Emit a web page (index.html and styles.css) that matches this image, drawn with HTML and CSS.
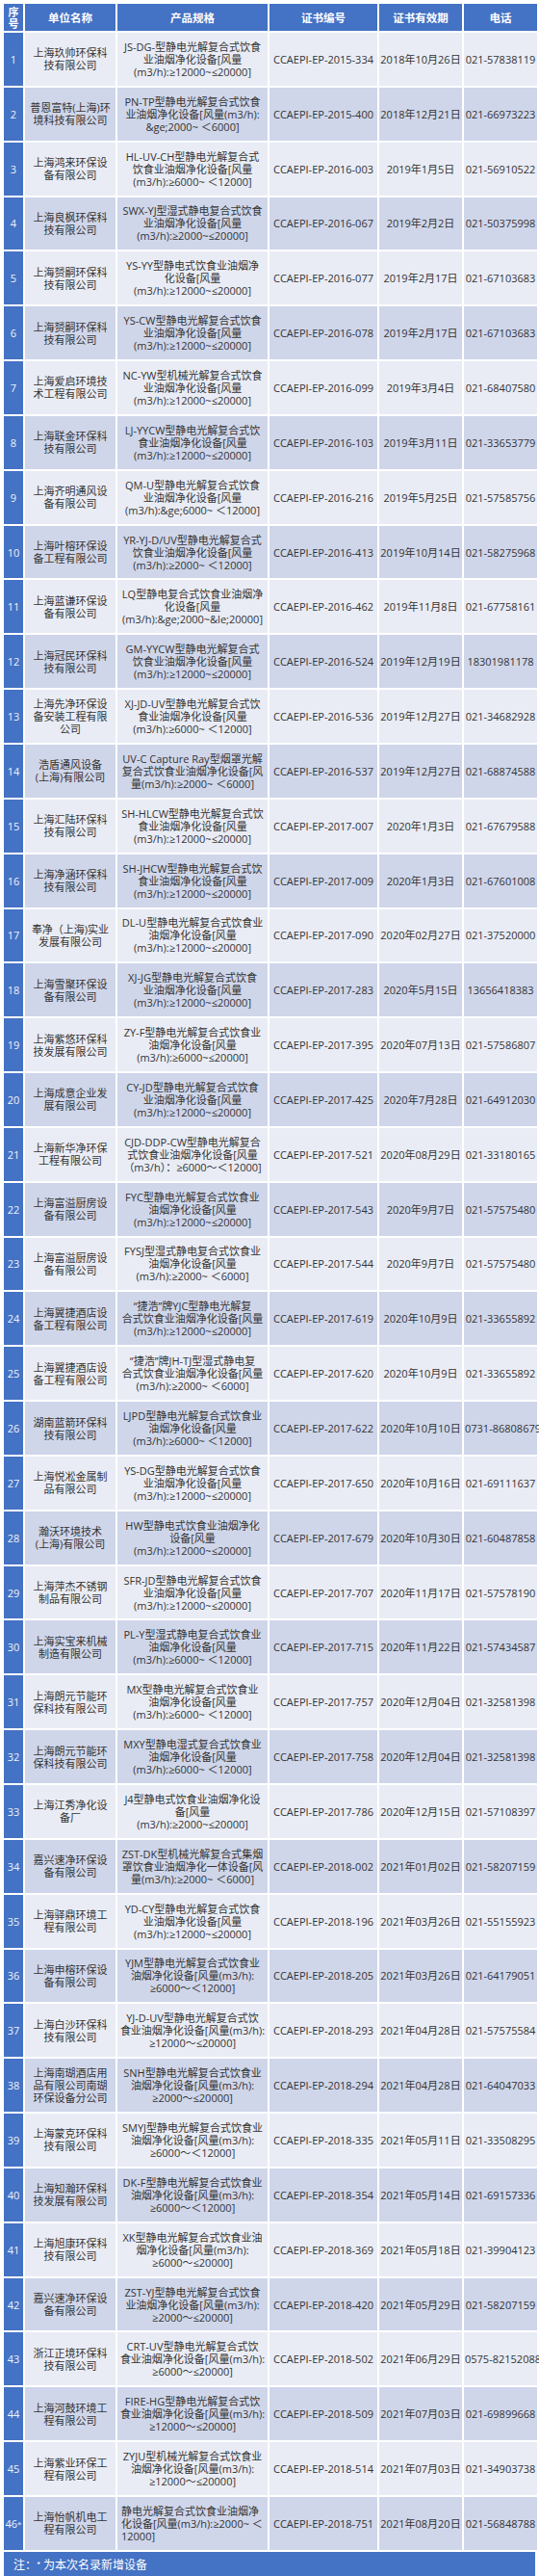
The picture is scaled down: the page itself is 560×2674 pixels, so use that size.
FILE: index.html
```html
<!DOCTYPE html>
<html lang="zh-CN">
<head>
<meta charset="utf-8">
<title>饮食业油烟净化设备名录</title>
<link rel="stylesheet" href="styles.css">
</head>
<body>
<div class="sheet">
<table class="cert-table">
<colgroup>
<col class="c-no"><col class="c-name"><col class="c-spec"><col class="c-cert"><col class="c-date"><col class="c-tel">
</colgroup>
<thead>
<tr><th class="h-no">序<br>号</th><th>单位名称</th><th>产品规格</th><th>证书编号</th><th>证书有效期</th><th>电话</th></tr>
</thead>
<tbody>
<tr><td class="no">1</td><td>上海玖帅环保科<br>技有限公司</td><td>JS-DG-型静电光解复合式饮食<br>业油烟净化设备[风量<br>(m3/h):≥12000~≤20000]</td><td>CCAEPI-EP-2015-334</td><td>2018年10月26日</td><td>021-57838119</td></tr>
<tr><td class="no">2</td><td>普恩富特(上海)环<br>境科技有限公司</td><td>PN-TP型静电光解复合式饮食<br>业油烟净化设备[风量(m3/h):<br>&amp;ge;2000~ ＜6000]</td><td>CCAEPI-EP-2015-400</td><td>2018年12月21日</td><td>021-66973223</td></tr>
<tr><td class="no">3</td><td>上海鸿来环保设<br>备有限公司</td><td>HL-UV-CH型静电光解复合式<br>饮食业油烟净化设备[风量<br>(m3/h):≥6000~ ＜12000]</td><td>CCAEPI-EP-2016-003</td><td>2019年1月5日</td><td>021-56910522</td></tr>
<tr><td class="no">4</td><td>上海良枫环保科<br>技有限公司</td><td>SWX-YJ型湿式静电复合式饮食<br>业油烟净化设备[风量<br>(m3/h):≥2000~≤20000]</td><td>CCAEPI-EP-2016-067</td><td>2019年2月2日</td><td>021-50375998</td></tr>
<tr><td class="no">5</td><td>上海赟嗣环保科<br>技有限公司</td><td>YS-YY型静电式饮食业油烟净<br>化设备[风量<br>(m3/h):≥12000~≤20000]</td><td>CCAEPI-EP-2016-077</td><td>2019年2月17日</td><td>021-67103683</td></tr>
<tr><td class="no">6</td><td>上海赟嗣环保科<br>技有限公司</td><td>YS-CW型静电光解复合式饮食<br>业油烟净化设备[风量<br>(m3/h):≥12000~≤20000]</td><td>CCAEPI-EP-2016-078</td><td>2019年2月17日</td><td>021-67103683</td></tr>
<tr><td class="no">7</td><td>上海爱启环境技<br>术工程有限公司</td><td>NC-YW型机械光解复合式饮食<br>业油烟净化设备[风量<br>(m3/h):≥12000~≤20000]</td><td>CCAEPI-EP-2016-099</td><td>2019年3月4日</td><td>021-68407580</td></tr>
<tr><td class="no">8</td><td>上海联金环保科<br>技有限公司</td><td>LJ-YYCW型静电光解复合式饮<br>食业油烟净化设备[风量<br>(m3/h):≥12000~≤20000]</td><td>CCAEPI-EP-2016-103</td><td>2019年3月11日</td><td>021-33653779</td></tr>
<tr><td class="no">9</td><td>上海齐明通风设<br>备有限公司</td><td>QM-U型静电光解复合式饮食<br>业油烟净化设备[风量<br>(m3/h):&amp;ge;6000~ ＜12000]</td><td>CCAEPI-EP-2016-216</td><td>2019年5月25日</td><td>021-57585756</td></tr>
<tr><td class="no">10</td><td>上海叶榕环保设<br>备工程有限公司</td><td>YR-YJ-D/UV型静电光解复合式<br>饮食业油烟净化设备[风量<br>(m3/h):≥2000~ ＜12000]</td><td>CCAEPI-EP-2016-413</td><td>2019年10月14日</td><td>021-58275968</td></tr>
<tr><td class="no">11</td><td>上海蓝谦环保设<br>备有限公司</td><td>LQ型静电复合式饮食业油烟净<br>化设备[风量<br>(m3/h):&amp;ge;2000~&amp;le;20000]</td><td>CCAEPI-EP-2016-462</td><td>2019年11月8日</td><td>021-67758161</td></tr>
<tr><td class="no">12</td><td>上海冠民环保科<br>技有限公司</td><td>GM-YYCW型静电光解复合式<br>饮食业油烟净化设备[风量<br>(m3/h):≥12000~≤20000]</td><td>CCAEPI-EP-2016-524</td><td>2019年12月19日</td><td>18301981178</td></tr>
<tr><td class="no">13</td><td>上海先净环保设<br>备安装工程有限<br>公司</td><td>XJ-JD-UV型静电光解复合式饮<br>食业油烟净化设备[风量<br>(m3/h):≥6000~ ＜12000]</td><td>CCAEPI-EP-2016-536</td><td>2019年12月27日</td><td>021-34682928</td></tr>
<tr><td class="no">14</td><td>浩盾通风设备<br>(上海)有限公司</td><td>UV-C Capture Ray型烟罩光解<br>复合式饮食业油烟净化设备[风<br>量(m3/h):≥2000~ ＜6000]</td><td>CCAEPI-EP-2016-537</td><td>2019年12月27日</td><td>021-68874588</td></tr>
<tr><td class="no">15</td><td>上海汇陆环保科<br>技有限公司</td><td>SH-HLCW型静电光解复合式饮<br>食业油烟净化设备[风量<br>(m3/h):≥12000~≤20000]</td><td>CCAEPI-EP-2017-007</td><td>2020年1月3日</td><td>021-67679588</td></tr>
<tr><td class="no">16</td><td>上海净涵环保科<br>技有限公司</td><td>SH-JHCW型静电光解复合式饮<br>食业油烟净化设备[风量<br>(m3/h):≥12000~≤20000]</td><td>CCAEPI-EP-2017-009</td><td>2020年1月3日</td><td>021-67601008</td></tr>
<tr><td class="no">17</td><td>奉净（上海)实业<br>发展有限公司</td><td>DL-U型静电光解复合式饮食业<br>油烟净化设备[风量<br>(m3/h):≥12000~≤20000]</td><td>CCAEPI-EP-2017-090</td><td>2020年02月27日</td><td>021-37520000</td></tr>
<tr><td class="no">18</td><td>上海雪聚环保设<br>备有限公司</td><td>XJ-JG型静电光解复合式饮食<br>业油烟净化设备[风量<br>(m3/h):≥12000~≤20000]</td><td>CCAEPI-EP-2017-283</td><td>2020年5月15日</td><td>13656418383</td></tr>
<tr><td class="no">19</td><td>上海紫悠环保科<br>技发展有限公司</td><td>ZY-F型静电光解复合式饮食业<br>油烟净化设备[风量<br>(m3/h):≥6000~≤20000]</td><td>CCAEPI-EP-2017-395</td><td>2020年07月13日</td><td>021-57586807</td></tr>
<tr><td class="no">20</td><td>上海成意企业发<br>展有限公司</td><td>CY-JD型静电光解复合式饮食<br>业油烟净化设备[风量<br>(m3/h):≥12000~≤20000]</td><td>CCAEPI-EP-2017-425</td><td>2020年7月28日</td><td>021-64912030</td></tr>
<tr><td class="no">21</td><td>上海新华净环保<br>工程有限公司</td><td>CJD-DDP-CW型静电光解复合<br>式饮食业油烟净化设备[风量<br>（m3/h）：≥6000～＜12000]</td><td>CCAEPI-EP-2017-521</td><td>2020年08月29日</td><td>021-33180165</td></tr>
<tr><td class="no">22</td><td>上海富溢厨房设<br>备有限公司</td><td>FYC型静电光解复合式饮食业<br>油烟净化设备[风量<br>(m3/h):≥12000~≤20000]</td><td>CCAEPI-EP-2017-543</td><td>2020年9月7日</td><td>021-57575480</td></tr>
<tr><td class="no">23</td><td>上海富溢厨房设<br>备有限公司</td><td>FYSJ型湿式静电复合式饮食业<br>油烟净化设备[风量<br>(m3/h):≥2000~ ＜6000]</td><td>CCAEPI-EP-2017-544</td><td>2020年9月7日</td><td>021-57575480</td></tr>
<tr><td class="no">24</td><td>上海翼捷酒店设<br>备工程有限公司</td><td>“捷浩”牌YJC型静电光解复<br>合式饮食业油烟净化设备[风量<br>(m3/h):≥12000~≤20000]</td><td>CCAEPI-EP-2017-619</td><td>2020年10月9日</td><td>021-33655892</td></tr>
<tr><td class="no">25</td><td>上海翼捷酒店设<br>备工程有限公司</td><td>“捷浩”牌JH-TJ型湿式静电复<br>合式饮食业油烟净化设备[风量<br>(m3/h):≥2000~ ＜6000]</td><td>CCAEPI-EP-2017-620</td><td>2020年10月9日</td><td>021-33655892</td></tr>
<tr><td class="no">26</td><td>湖南蓝箭环保科<br>技有限公司</td><td>LJPD型静电光解复合式饮食业<br>油烟净化设备[风量<br>(m3/h):≥6000~ ＜12000]</td><td>CCAEPI-EP-2017-622</td><td>2020年10月10日</td><td>0731-86808679</td></tr>
<tr><td class="no">27</td><td>上海悦凇金属制<br>品有限公司</td><td>YS-DG型静电光解复合式饮食<br>业油烟净化设备[风量<br>(m3/h):≥12000~≤20000]</td><td>CCAEPI-EP-2017-650</td><td>2020年10月16日</td><td>021-69111637</td></tr>
<tr><td class="no">28</td><td>瀚沃环境技术<br>(上海)有限公司</td><td>HW型静电式饮食业油烟净化<br>设备[风量<br>(m3/h):≥12000~≤20000]</td><td>CCAEPI-EP-2017-679</td><td>2020年10月30日</td><td>021-60487858</td></tr>
<tr><td class="no">29</td><td>上海萍杰不锈钢<br>制品有限公司</td><td>SFR-JD型静电光解复合式饮食<br>业油烟净化设备[风量<br>(m3/h):≥12000~≤20000]</td><td>CCAEPI-EP-2017-707</td><td>2020年11月17日</td><td>021-57578190</td></tr>
<tr><td class="no">30</td><td>上海实宝来机械<br>制造有限公司</td><td>PL-Y型湿式静电复合式饮食业<br>油烟净化设备[风量<br>(m3/h):≥6000~ ＜12000]</td><td>CCAEPI-EP-2017-715</td><td>2020年11月22日</td><td>021-57434587</td></tr>
<tr><td class="no">31</td><td>上海朗元节能环<br>保科技有限公司</td><td>MX型静电光解复合式饮食业<br>油烟净化设备[风量<br>(m3/h):≥6000~ ＜12000]</td><td>CCAEPI-EP-2017-757</td><td>2020年12月04日</td><td>021-32581398</td></tr>
<tr><td class="no">32</td><td>上海朗元节能环<br>保科技有限公司</td><td>MXY型静电湿式复合式饮食业<br>油烟净化设备[风量<br>(m3/h):≥6000~ ＜12000]</td><td>CCAEPI-EP-2017-758</td><td>2020年12月04日</td><td>021-32581398</td></tr>
<tr><td class="no">33</td><td>上海江秀净化设<br>备厂</td><td>J4型静电式饮食业油烟净化设<br>备[风量<br>(m3/h):≥2000~≤20000]</td><td>CCAEPI-EP-2017-786</td><td>2020年12月15日</td><td>021-57108397</td></tr>
<tr><td class="no">34</td><td>嘉兴速净环保设<br>备有限公司</td><td>ZST-DK型机械光解复合式集烟<br>罩饮食业油烟净化一体设备[风<br>量(m3/h):≥2000~ ＜6000]</td><td>CCAEPI-EP-2018-002</td><td>2021年01月02日</td><td>021-58207159</td></tr>
<tr><td class="no">35</td><td>上海驿鼎环境工<br>程有限公司</td><td>YD-CY型静电光解复合式饮食<br>业油烟净化设备[风量<br>(m3/h):≥12000~≤20000]</td><td>CCAEPI-EP-2018-196</td><td>2021年03月26日</td><td>021-55155923</td></tr>
<tr><td class="no">36</td><td>上海申榕环保设<br>备有限公司</td><td>YJM型静电光解复合式饮食业<br>油烟净化设备[风量(m3/h):<br>≥6000～＜12000]</td><td>CCAEPI-EP-2018-205</td><td>2021年03月26日</td><td>021-64179051</td></tr>
<tr><td class="no">37</td><td>上海白沙环保科<br>技有限公司</td><td>YJ-D-UV型静电光解复合式饮<br>食业油烟净化设备[风量(m3/h):<br>≥12000～≤20000]</td><td>CCAEPI-EP-2018-293</td><td>2021年04月28日</td><td>021-57575584</td></tr>
<tr><td class="no">38</td><td>上海南瑚酒店用<br>品有限公司南瑚<br>环保设备分公司</td><td>SNH型静电光解复合式饮食业<br>油烟净化设备[风量(m3/h):<br>≥2000～≤20000]</td><td>CCAEPI-EP-2018-294</td><td>2021年04月28日</td><td>021-64047033</td></tr>
<tr><td class="no">39</td><td>上海蒙克环保科<br>技有限公司</td><td>SMYJ型静电光解复合式饮食业<br>油烟净化设备[风量(m3/h):<br>≥6000～＜12000]</td><td>CCAEPI-EP-2018-335</td><td>2021年05月11日</td><td>021-33508295</td></tr>
<tr><td class="no">40</td><td>上海知瀚环保科<br>技发展有限公司</td><td>DK-F型静电光解复合式饮食业<br>油烟净化设备[风量(m3/h):<br>≥6000～＜12000]</td><td>CCAEPI-EP-2018-354</td><td>2021年05月14日</td><td>021-69157336</td></tr>
<tr><td class="no">41</td><td>上海旭康环保科<br>技有限公司</td><td>XK型静电光解复合式饮食业油<br>烟净化设备[风量(m3/h):<br>≥6000～≤20000]</td><td>CCAEPI-EP-2018-369</td><td>2021年05月18日</td><td>021-39904123</td></tr>
<tr><td class="no">42</td><td>嘉兴速净环保设<br>备有限公司</td><td>ZST-YJ型静电光解复合式饮食<br>业油烟净化设备[风量(m3/h):<br>≥2000～≤20000]</td><td>CCAEPI-EP-2018-420</td><td>2021年05月29日</td><td>021-58207159</td></tr>
<tr><td class="no">43</td><td>浙江正境环保科<br>技有限公司</td><td>CRT-UV型静电光解复合式饮<br>食业油烟净化设备[风量(m3/h):<br>≥6000～≤20000]</td><td>CCAEPI-EP-2018-502</td><td>2021年06月29日</td><td>0575-82152088</td></tr>
<tr><td class="no">44</td><td>上海河鼓环境工<br>程有限公司</td><td>FIRE-HG型静电光解复合式饮<br>食业油烟净化设备[风量(m3/h):<br>≥12000～≤20000]</td><td>CCAEPI-EP-2018-509</td><td>2021年07月03日</td><td>021-69899668</td></tr>
<tr><td class="no">45</td><td>上海紫业环保工<br>程有限公司</td><td>ZYJU型机械光解复合式饮食业<br>油烟净化设备[风量(m3/h):<br>≥12000～≤20000]</td><td>CCAEPI-EP-2018-514</td><td>2021年07月03日</td><td>021-34903738</td></tr>
<tr><td class="no">46<span class="star">*</span></td><td>上海怡帆机电工<br>程有限公司</td><td class="left">静电光解复合式饮食业油烟净<br>化设备[风量(m3/h):≥2000~ ＜<br>12000]</td><td>CCAEPI-EP-2018-751</td><td>2021年08月20日</td><td>021-56848788</td></tr>
</tbody>
</table>
<div class="note">注：<span class="note-star">*</span> 为本次名录新增设备</div>
</div>
</body>
</html>
```

FILE: styles.css
```css
html, body {
  margin: 0;
  padding: 0;
  background: #ffffff;
}

body {
  font-family: "Open Sans", "Noto Sans CJK SC", sans-serif;
  color: #333333;
}

.sheet {
  width: 556px;
  padding: 2px 2px 0 2px;
}

.cert-table {
  width: 556px;
  border-collapse: collapse;
  table-layout: fixed;
  font-size: 11px;
  line-height: 13px;
}

.c-no { width: 22px; }
.c-name { width: 96px; }
.c-spec { width: 158px; }
.c-cert { width: 114px; }
.c-date { width: 88px; }
.c-tel { width: 78px; }

.cert-table th,
.cert-table td {
  border: 2px solid #ffffff;
  padding: 0 1px;
  text-align: center;
  vertical-align: middle;
  white-space: nowrap;
  overflow: visible;
}

.cert-table thead th {
  background: #4472c4;
  color: #ffffff;
  font-family: "Noto Sans CJK SC", sans-serif;
  font-weight: 700;
  font-size: 11.5px;
  height: 28px;
  padding: 0;
}

.cert-table thead th.h-no {
  font-size: 11px;
  line-height: 12px;
}

.cert-table tbody tr {
  height: 56.85px;
}

.cert-table tbody tr:nth-child(odd) td {
  background: #e9ecf5;
}

.cert-table tbody tr:nth-child(even) td {
  background: #cfd6ea;
}

.cert-table tbody tr td.no {
  background: #4472c4;
  color: #eef2fa;
  font-size: 11px;
  padding: 0;
}

.cert-table tbody tr td.left {
  text-align: left;
  padding-left: 4px;
}

.star {
  font-size: 8px;
  vertical-align: 1px;
}

.note {
  margin: 0 2px;
  height: 25px;
  line-height: 25px;
  background: #4472c4;
  color: #ffffff;
  font-family: "Noto Sans CJK SC", sans-serif;
  font-size: 12px;
  padding-left: 10px;
}

.note-star {
  font-size: 9px;
  vertical-align: 1px;
}
```
